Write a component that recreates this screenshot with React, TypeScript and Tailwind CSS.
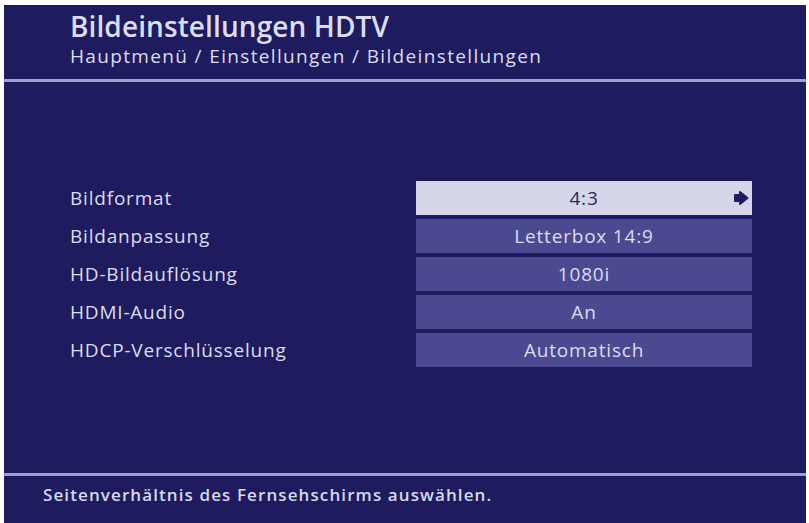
const rows = [
  { label: 'Bildformat', value: '4:3', active: true },
  { label: 'Bildanpassung', value: 'Letterbox 14:9' },
  { label: 'HD-Bildauflösung', value: '1080i' },
  { label: 'HDMI-Audio', value: 'An' },
  { label: 'HDCP-Verschlüsselung', value: 'Automatisch' },
];

function ArrowRight() {
  return (
    <svg width="16" height="15" viewBox="0 0 16 15" className="absolute right-[3px] top-1/2 -translate-y-1/2">
      <path d="M2 4.5 H7 V1.5 L14.5 7.5 L7 13.5 V10.5 H2 Z" fill="#1e1b5e" stroke="#1e1b5e" strokeWidth="2" strokeLinejoin="round" />
    </svg>
  );
}

export default function App() {
  return (
    <div className="w-[809px] h-[523px] bg-white pt-[5px] pl-[4px] pr-[3px] font-['Open_Sans',sans-serif]">
      <div className="h-full bg-[#1e1b5e] flex flex-col text-[#dcdcf2]">
        <div className="pl-[66px] pt-[4px] h-[74px]">
          <h1 className="text-[28px] leading-[34px] font-semibold tracking-[0.1px]">
            Bildeinstellungen HDTV
          </h1>
          <p className="text-[19px] leading-[24px] mt-[1px] font-medium tracking-[1.35px]">
            Hauptmenü / Einstellungen / Bildeinstellungen
          </p>
        </div>
        <div className="h-[3px] bg-[#9d9dd0]" />

        <div className="flex-1 pt-[99px] flex flex-col gap-[4px] text-[19px] font-medium tracking-[0.8px]">
          {rows.map((r) => (
            <div key={r.label} className="flex items-center h-[34px]">
              <span className="pl-[66px] w-[412px] leading-[24px]">{r.label}</span>
              <div
                className={
                  r.active
                    ? 'relative w-[336px] h-full flex items-center justify-center bg-[#d6d6ea] text-[#2a2866]'
                    : 'relative w-[336px] h-full flex items-center justify-center bg-[#4b4990]'
                }
              >
                {r.value}
                {r.active && <ArrowRight />}
              </div>
            </div>
          ))}
        </div>

        <div className="h-[3px] bg-[#9d9dd0]" />
        <div className="h-[47px] pl-[39px] pt-[8px] text-[17px] leading-[22px] font-semibold tracking-[1.1px] text-[#d8d8ee]">
          Seitenverhältnis des Fernsehschirms auswählen.
        </div>
      </div>
    </div>
  );
}
